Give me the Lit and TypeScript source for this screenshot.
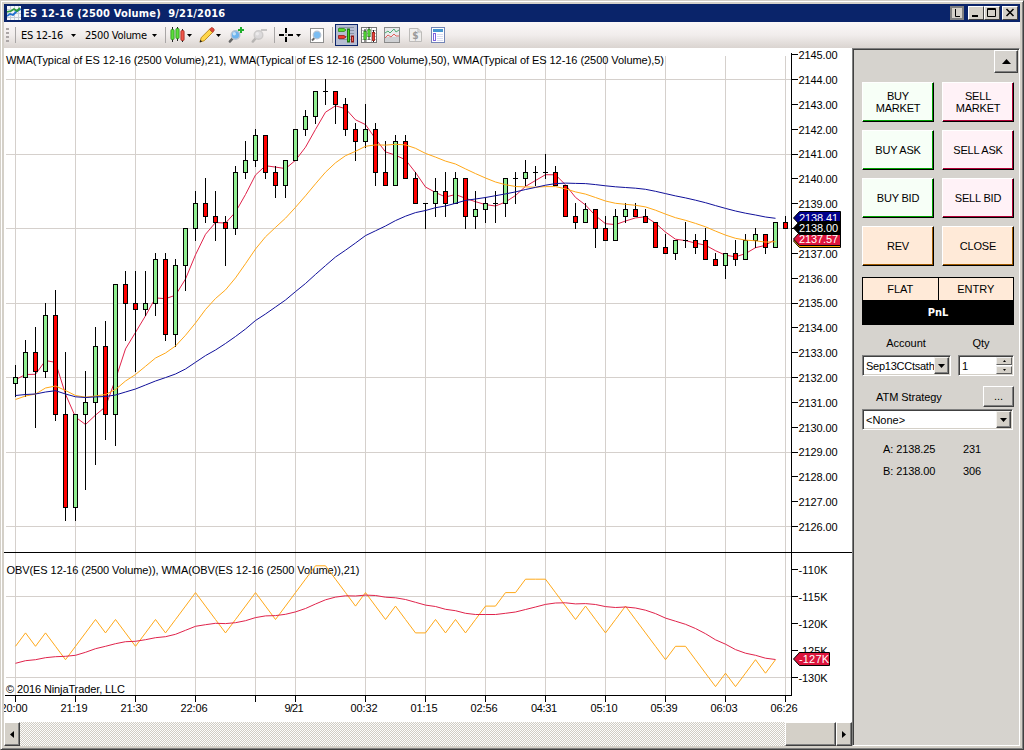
import { LitElement, html, svg, css } from "lit";
import { customElement } from "lit/decorators.js";

// open, high, low, close
type Bar = [number, number, number, number];

// Prices are offsets from 2100: body top, body bottom, high, low, direction
const RAW = `32 31.75 32.5 31.25 g|33 32 33.5 31.25 g|33 32.25 34 30 r|34.5 32.25 35 32 g|34.5 30.5 35.5 30.25 r|30.5 26.75 33 26.25 r
30.5 26.75 30.5 26.25 g|31 30.5 32.25 27.5 g|33.25 31 34 28.5 g|33.25 30.5 34.25 29.5 r|35.75 30.5 35.75 29.25 g|35.75 35 36.25 33.5 r
35 34.75 36.25 32.25 r|35 34.75 36.25 34.5 g|36.75 35 37 34.5 g|36.75 33.75 37 33.5 r|36.5 33.75 36.75 33.25 g|38 36.5 38 35.5 g
39 38 39.5 37.5 g|39 38.5 40 38.25 r|38.5 38.25 39.5 37.5 r|38.25 38 38.5 36.5 r|40.25 38 40.5 37.75 g|40.75 40.25 41.5 40 g
41.75 40.75 42 40.5 g|41.75 40.25 41.75 40 r|40.25 39.75 40.5 39.25 r|40.75 39.75 40.75 39.25 g|42 40.75 42 40.75 g|42.5 42 42.75 41.75 g
43.5 42.5 43.5 42.25 g|43.5 43.5 44 43 g|43.5 43 43.5 42.25 r|43 42 43.25 41.75 r|42 41.5 42.25 40.75 r|42 41.5 43 41.25 g
42 40.25 42.25 39.75 r|40.25 39.75 41.5 39.75 r|41.5 39.75 41.75 39.75 g|41.5 40 41.75 40 r|40 39 40.25 39 r|39 39 39 38 g
39.5 39 40 38.5 g|39.5 39 40.25 38.5 r|40 39 40.25 39 g|40 38.5 40 38 r|38.75 38.5 39.5 38 g|39 38.75 39.25 38.25 g
39 39 39.5 38.25 g|40 39 40 38.5 g|40 40 40.25 39 g|40.25 40 40.75 39.75 g|40.25 40.25 40.5 39.75 g|40.25 40.25 41 40 g
40.25 39.75 40.5 39.75 r|39.75 38.5 39.75 38.5 r|38.5 38.25 39 38 r|38.75 38.25 39 38.25 g|38.75 38 38.75 37.25 r|38 37.5 38.5 37.5 r
38.5 37.5 38.75 37.5 g|38.75 38.5 39 38.25 g|38.75 38.5 39 38.5 r|38.5 38.25 38.75 38.25 r|38.25 37.25 38.25 37.25 r|37.25 37 37.75 37 r
37.5 37 37.5 36.75 g|37.5 37.5 38.25 37.25 g|37.5 37.25 37.75 37 r|37.5 36.75 38 36.75 r|36.75 36.5 37 36.5 r|37 36.5 37 36 g
37 36.75 37.5 36.5 r|37.5 36.75 37.75 36.75 g|37.75 37.5 38 37.25 g|37.75 37.25 37.75 37 r|38.25 37.25 38.25 37.25 g|38.25 38 38.5 38 r`;

const BARS: Bar[] = RAW.split(/[|\n]/).map((s) => {
  const [t, b, h, l, d] = s.trim().split(" ");
  return (d === "g" ? [+b, +h, +l, +t] : [+t, +h, +l, +b]) as Bar;
});

const xAt = (i: number) => 15.5 + i * 10;
const yAt = (p: number) => 79.5 + (44 - p) * 24.83;

const typical = BARS.slice(0, -1).map(([, h, l, c]) => (h + l + c) / 3);

function wma(src: number[], n: number, from: number): number[] {
  const out: number[] = [];
  for (let i = from; i < src.length; i++) {
    let sum = 0;
    for (let k = 0; k < n; k++) sum += src[i - k] * (n - k);
    out.push(sum / ((n * (n + 1)) / 2));
  }
  return out;
}

// The first bars of each average depend on history that precedes the view.
const SEED5 = [379.7, 374.5, 374.3, 360.5];
const SEED21 = [399.5, 396, 394, 388, 386, 390.5, 395.5, 397.2, 396, 394.5, 389.5, 381, 374.5, 366.3, 358, 353, 346, 335.3, 323, 309.5];
const SEED50 = [
  395.5, 394.5, 394, 392, 390.7, 394, 396.8, 397.5, 396.9, 396.5, 395, 392, 389, 385, 381, 377.6, 374, 369, 362.3, 355.6,
  350, 343.5, 336.5, 329, 320.5, 314, 307, 300, 291.6, 283.5, 274.4, 265.6, 257, 250.2, 243, 235.6, 230.8, 226, 220.6, 216.2,
  212.6, 210.5, 207.7, 206, 203.3, 200.4, 199, 197.5, 195.7,
];

// On-balance volume, counted in 2500-contract bars below the peak
const OBV = [
  6, 5, 6, 5, 6, 7, 6, 5, 4, 5, 4, 5, 6, 5, 4, 5, 4, 3, 2, 3, 4, 5, 4, 3, 2, 3, 4, 3, 2, 1, 0, 0, 1, 2, 3, 2, 3, 4, 3, 4,
  5, 5, 4, 5, 4, 5, 4, 3, 3, 2, 2, 1, 1, 1, 2, 3, 4, 3, 4, 5, 4, 3, 4, 5, 6, 7, 6, 6, 7, 8, 9, 8, 9, 8, 7, 8, 7,
];
const obvY = (n: number) => 565.8 + n * 13.42;
const OBV_SEED = [355, 347, 344, 338, 335, 334, 331, 322, 311, 304, 296, 290, 289, 284, 278, 275, 268, 256, 244, 239].map((v) => 545 + v / 3);

const points = (ys: number[]) => ys.map((y, i) => `${xAt(i)},${y.toFixed(1)}`).join(" ");

const LINE5 = points([...SEED5, ...wma(typical, 5, 4).map(yAt)]);
const LINE21 = points([...SEED21, ...wma(typical, 21, 20).map(yAt)]);
const LINE50 = points([...SEED50, ...wma(typical, 50, 49).map(yAt)]);
const LINE_OBV = points(OBV.map(obvY));
const LINE_OBV_WMA = points([...OBV_SEED, ...wma(OBV, 21, 20).map(obvY)]);

const TIMES: [number, string, number][] = [
  [15, "20:00", 27], [75, "21:19", 27], [135, "21:30", 27], [195, "22:06", 27], [255, "", 0], [295, "9/21", 19], [365, "00:32", 27],
  [425, "01:15", 27], [485, "02:56", 27], [545, "04:31", 26], [605, "05:10", 27], [665, "05:39", 27], [725, "06:03", 27], [785, "06:26", 27],
];

@customElement("price-chart")
export class PriceChart extends LitElement {
  static styles = css`
    :host { display: block; background: #fff; overflow: hidden; }
    svg { display: block; font: 11px "Liberation Sans", Arial, sans-serif; }
    .grid { fill: #d5d0cc; }
    .ink { fill: #000; }
    .line { fill: none; stroke-width: 1; }
    .fast { stroke: #e0234b; }
    .mid { stroke: #ffa818; }
    .slow { stroke: #10109a; }
    .up { fill: #90ee90; }
    .down { fill: #f00; }
    .tag { stroke: #000; stroke-width: 1; }
    .tagtext { fill: #fff; }
  `;

  private tag(y: number, color: string, text: string, right: number) {
    const w = text.length > 5 ? 39 : 30;
    return svg`<path class="tag" fill=${color} d=${`M793.5 ${y} L799.5 ${y - 6.5} H${right} V${y + 6.5} H799.5 Z`}></path>
      ${text ? svg`<text class="tagtext" x="799" y=${y + 4} textLength=${w}>${text}</text>` : ""}`;
  }

  private candle(b: Bar, i: number) {
    const x = 15 + i * 10;
    const f = (p: number) => Math.floor(yAt(p) + 0.05);
    const [o, h, l, c] = b;
    const t = f(Math.max(o, c));
    const m = f(Math.min(o, c));
    return svg`<rect x=${x} y=${f(h)} width="1" height=${f(l) - f(h) + 1}></rect>
      <rect x=${x - 2} y=${t} width="5" height=${m - t + 1}></rect>
      ${m - t > 1 ? svg`<rect class=${c > o ? "up" : "down"} x=${x - 1} y=${t + 1} width="3" height=${m - t - 1}></rect>` : ""}`;
  }

  render() {
    const prices = Array.from({ length: 20 }, (_, k) => 45 - k);
    const volumes = [110, 115, 120, 125, 130];
    const vy = (v: number) => Math.floor(569.5 + (v - 110) * 5.4);
    return html`<svg width="848" height="674" viewBox="4 48 848 674">
      <g class="grid" shape-rendering="crispEdges">
        ${[44, 41, 38, 35, 32, 29, 26].map((p) => svg`<rect x="6" y=${Math.floor(yAt(p) + 0.05)} width="785" height="1"></rect>`)}
        ${[115, 130].map((v) => svg`<rect x="6" y=${vy(v)} width="785" height="1"></rect>`)}
        ${TIMES.map(([x]) => svg`<rect x=${x} y="56" width="1" height="639"></rect>`)}
      </g>
      <text x="6" y="64" textLength="658">WMA(Typical of ES 12-16 (2500 Volume),21), WMA(Typical of ES 12-16 (2500 Volume),50), WMA(Typical of ES 12-16 (2500 Volume),5)</text>
      <text x="6.5" y="574" textLength="353">OBV(ES 12-16 (2500 Volume)), WMA(OBV(ES 12-16 (2500 Volume)),21)</text>
      <text x="6" y="693" textLength="119">© 2016 NinjaTrader, LLC</text>
      <polyline class="line fast" points=${LINE5}></polyline>
      <g shape-rendering="crispEdges">${BARS.map((b, i) => this.candle(b, i))}</g>
      <polyline class="line mid" points=${LINE21}></polyline>
      <polyline class="line slow" points=${LINE50}></polyline>
      <polyline class="line mid" points=${LINE_OBV}></polyline>
      <polyline class="line fast" points=${LINE_OBV_WMA}></polyline>
      <g class="ink" shape-rendering="crispEdges">
        <rect x="4" y="552" width="848" height="1"></rect>
        <rect x="791" y="53" width="1" height="643"></rect>
        <rect x="5" y="695" width="787" height="1"></rect>
        ${prices.map((p) => svg`<rect x="792" y=${Math.floor(yAt(p) + 0.05)} width="6" height="1"></rect>`)}
        ${volumes.map((v) => svg`<rect x="792" y=${vy(v)} width="6" height="1"></rect>`)}
        ${TIMES.map(([x]) => svg`<rect x=${x} y="696" width="1" height="6"></rect>`)}
      </g>
      ${prices.filter((p) => p !== 38).map((p) => svg`<text x="798.5" y=${Math.floor(yAt(p)) + 4.5} textLength="39">${2100 + p}.00</text>`)}
      ${volumes.map((v) => svg`<text x="798.5" y=${vy(v) + 4.5} textLength="29">-${v}K</text>`)}
      ${TIMES.map(([x, t, w]) => (t ? svg`<text x=${x - 1 - w / 2} y="712" textLength=${w}>${t}</text>` : ""))}
      ${this.tag(218, "#00008b", "2138.41", 840.5)}
      ${this.tag(241, "#ffa500", "", 840.5)}
      ${this.tag(239, "#dc143c", "2137.57", 840.5)}
      ${this.tag(228, "#000", "2138.00", 840.5)}
      ${this.tag(659, "#dc143c", "-127K", 829.5)}
    </svg>`;
  }
}

const arrow = html`<svg class="arrow" width="5" height="3"><path d="M0 0H5L2.5 3Z"></path></svg>`;
const sep = html`<span class="sep"></span>`;

const lens = (fade: boolean, mark: unknown) => html`<svg width="17" height="17" viewBox="0 0 17 17" opacity=${fade ? 0.5 : 1}>
  <path d="M4.6 11.4L1.8 14.6" stroke=${fade ? "#888" : "#666"} stroke-width="2.4" stroke-linecap="round"></path>
  <circle cx="7.5" cy="8" r="4.3" fill=${fade ? "#c8c8cc" : "#6fb4ee"} stroke=${fade ? "#aaa" : "#b5c3d3"} stroke-width="1.4"></circle>
  <circle cx="6.3" cy="6.8" r="1.7" fill="#fff" opacity=".6"></circle>${mark}
</svg>`;

@customElement("app-root")
export class AppRoot extends LitElement {
  static styles = css`
    :host { display: block; width: 1024px; height: 750px; font: 11px "Liberation Sans", Arial, sans-serif; color: #000; }
    .window {
      box-sizing: border-box; width: 1024px; height: 750px; background: #d4d0c8; padding: 3px 2px 2px 3px;
      border: 1px solid; border-color: #d4d0c8 #404040 #404040 #d4d0c8;
      box-shadow: inset 1px 1px #fff, inset -1px -1px #808080;
    }
    .title { display: flex; align-items: center; width: 1016px; height: 18px; background: #0a246a; color: #fff; }
    .title .name { font: bold 11px "DejaVu Sans Condensed", "DejaVu Sans", sans-serif; font-stretch: condensed; flex: 1; margin-left: 2px; white-space: pre; letter-spacing: 0.19px; }
    .title .logo { margin-left: 3px; }
    .wb { box-sizing: border-box; width: 16px; height: 14px; background: #d4d0c8; border: 1px solid; border-color: #fff #404040 #404040 #fff; display: block; }
    .wb.lock { width: 14px; background: #d4d0c8; border: 2px solid #808080; margin-right: 4px; }
    .wb.close { margin: 0 2px 0 2px; }
    .wb svg { display: block; }
    .toolbar {
      display: grid; align-items: center; width: 1016px; height: 26px;
      background: linear-gradient(#fbf8f8, #f1edec 50%, #dad4d0);
      font: 11px "DejaVu Sans Condensed", "DejaVu Sans", sans-serif; font-stretch: condensed;
      grid-template-columns: 11px 6px 50px 14px 67px 13px 5px 17px 12px 17px 12px 23px 23px 5px 17px 14px 22px 3px 26px 23px 25px 22px 16px;
    }
    .toolbar svg { display: block; }
    .grip { width: 3px; height: 15px; margin-left: 2px; background: repeating-linear-gradient(#aaa5a5 0 2px, transparent 2px 4px); }
    .sep { width: 1px; height: 16px; background: #a9a6a6; }
    .press { box-sizing: border-box; width: 23px; height: 22px; border: 1px solid #0a246a; background: #b6bdd2; padding: 2px; }
    .tx { white-space: nowrap; letter-spacing: -0.3px; }
    .body { display: grid; grid-template-columns: 848px 168px; height: 698px; }
    .left { display: grid; grid-template-rows: 674px 24px; }
    .scroll { display: flex; justify-content: space-between; background: repeating-conic-gradient(#d0ccc4 0 25%, #fdfdfc 0 50%) 0 0 / 2px 2px; }
    .sb { box-sizing: border-box; width: 16px; height: 24px; background: #d4d0c8; border: 1px solid; border-color: #fff #404040 #404040 #fff; box-shadow: inset -1px -1px #808080; display: grid; place-items: center; }
    .thumb { width: 51px; margin-left: auto; }
    .panel {
      box-sizing: border-box; border: 1px solid; border-color: #808080 #fff #fff #808080; box-shadow: inset 1px 1px #404040;
      padding: 1px 1px 0 9px; display: flex; flex-direction: column; background: #d6d3ce;
    }
    .up { box-sizing: border-box; align-self: flex-end; width: 24px; height: 23px; border: 1px solid; border-color: #fff #404040 #404040 #fff; box-shadow: inset -1px -1px #808080; display: grid; place-items: center; }
    .orders { display: grid; grid-template-columns: 72px 72px; grid-auto-rows: 40px; gap: 8px; margin-top: 9px; }
    .btn {
      box-sizing: border-box; display: grid; place-items: center; text-align: center; line-height: 12px; padding: 0 1px 1px 1px;
      border: 1px solid; border-color: #fff #000 #000 #fff; letter-spacing: -0.2px;
    }
    .buy { background: #f7fff7; box-shadow: inset -1px -1px #00a000; }
    .sell { background: #fff2f7; box-shadow: inset -1px -1px #b00035; }
    .misc { background: #ffead8; box-shadow: inset -1px -1px #a05a00; }
    .pos { box-sizing: border-box; display: grid; grid-template-columns: 1fr 1fr; width: 152px; height: 48px; margin-top: 11px; background: #000; padding: 1px; grid-template-rows: 22px 24px; column-gap: 1px; }
    .pos span { background: #ffead8; display: grid; place-items: center; }
    .pos .pnl { grid-column: 1 / 3; background: #000; color: #fff; font: bold 11px "DejaVu Sans Condensed", "DejaVu Sans", sans-serif; }
    .labels { display: grid; grid-template-columns: 88px 62px; margin-top: 12px; height: 13px; line-height: 13px; text-align: center; }
    .fields { display: flex; gap: 7px; margin-top: 5px; }
    .field { box-sizing: border-box; height: 21px; background: #fff; border: 1px solid; border-color: #808080 #fff #fff #808080; box-shadow: inset 1px 1px #404040, inset -1px -1px #d4d0c8; display: flex; padding: 1px; line-height: 18px; overflow: hidden; }
    .field .val { flex: 1; overflow: hidden; white-space: nowrap; padding-left: 2px; letter-spacing: -0.25px; }
    .drop { box-sizing: border-box; width: 15px; height: 17px; background: #d4d0c8; border: 1px solid; border-color: #f4f2ee #404040 #404040 #f4f2ee; box-shadow: inset -1px -1px #808080; display: grid; place-items: center; }
    .acct { width: 89px; }
    .qty { width: 56px; }
    .spin { width: 16px; display: grid; grid-template-rows: 8px 8px; gap: 1px; }
    .spin span { background: #d4d0c8; border: 1px solid; border-color: #eee #606060 #606060 #eee; box-sizing: border-box; display: grid; place-items: center; }
    .atm { display: flex; justify-content: space-between; width: 152px; margin-top: 10px; height: 22px; line-height: 22px; }
    .atm .cap { padding-left: 14px; letter-spacing: -0.05px; }
    .more { box-sizing: border-box; width: 31px; height: 21px; border: 1px solid; border-color: #fff #404040 #404040 #fff; box-shadow: inset -1px -1px #808080; text-align: center; line-height: 19px; }
    .strategy { width: 151px; margin-top: 1px; }
    .strategy .val { letter-spacing: 0; }
    .quotes { display: grid; grid-template-columns: 80px 50px; grid-auto-rows: 22px; margin: 8px 0 0 21px; line-height: 22px; letter-spacing: -0.1px; }
  `;

  render() {
    return html`<div class="window">
      <div class="title">
        <svg class="logo" width="14" height="14" viewBox="0 0 14 14">
          <rect width="14" height="14" fill="#f4f6f8"></rect>
          <path d="M0 3.5H14M0 7.5H14M0 11.5H14M3.5 0V14M7.5 0V14M11.5 0V14" stroke="#c5ccd8"></path>
          <path d="M0 10L3 8L6 9L10 5L14 3" fill="none" stroke="#1d6fd0" stroke-width="1.8"></path>
          <path d="M0 6L4 5L7 3L10 5L13 2" fill="none" stroke="#2d9a3c" stroke-width="1.8"></path>
        </svg>
        <span class="name">ES 12-16 (2500 Volume)  9/21/2016</span>
        <span class="wb lock"><svg width="10" height="10"><path d="M3.5 1V8.5H8" fill="none" stroke="#000"></path></svg></span>
        <span class="wb"><svg width="14" height="12"><rect x="3" y="8" width="6" height="2"></rect></svg></span>
        <span class="wb"><svg width="14" height="12"><path d="M2.5 1.5H10.5V9.5H2.5ZM2.5 2.5H10.5" fill="none" stroke="#000"></path></svg></span>
        <span class="wb close"><svg width="14" height="12"><path d="M3.5 2L10.5 9M10.5 2L3.5 9" stroke="#000" stroke-width="1.5"></path></svg></span>
      </div>
      <div class="toolbar">
        <span class="grip"></span>${sep}
        <span class="tx">ES 12-16</span>${arrow}
        <span class="tx">2500 Volume</span>${arrow}
        ${sep}
        <svg width="15" height="16" viewBox="0 0 15 16">
          <path d="M2.5 0V15M7.5 0V14M12.5 2V15" stroke="#222"></path>
          <rect x=".9" y="2.5" width="3.2" height="10" rx="1" fill="#5be03a" stroke="#2a8a1a" stroke-width=".8"></rect>
          <rect x="5.9" y="1.5" width="3.2" height="10" rx="1" fill="#5be03a" stroke="#2a8a1a" stroke-width=".8"></rect>
          <rect x="10.9" y="3.5" width="3.2" height="10" rx="1" fill="#f0564a" stroke="#a02a20" stroke-width=".8"></rect>
        </svg>${arrow}
        <svg width="16" height="16" viewBox="0 0 16 16">
          <path d="M1 15L2.2 10.6L10.5 2.3L13.6 5.4L5.3 13.7Z" fill="#ffd64a" stroke="#b5851c" stroke-width=".9"></path>
          <path d="M10.5 2.3L12 .8Q13 .2 14 1L15 2Q15.6 3 15 3.9L13.6 5.4Z" fill="#e0483a" stroke="#a03020" stroke-width=".6"></path>
          <path d="M.6 15.4L1.5 12.8L3.2 14.5Z" fill="#222"></path>
        </svg>${arrow}
        ${lens(false, svg`<path d="M13 0V6M10 3H16" stroke="#1fae2b" stroke-width="2"></path>`)}
        ${lens(true, svg`<path d="M10 3H16" stroke="#999" stroke-width="2"></path>`)}
        ${sep}
        <svg width="15" height="15" viewBox="0 0 15 15"><path d="M7 0V5M7 9V14M0 7H5M9 7H14" stroke="#000" stroke-width="2"></path><rect x="6.5" y="6.5" width="1" height="1"></rect></svg>${arrow}
        <svg width="15" height="17" viewBox="0 0 15 17">
          <rect x=".5" y="1.5" width="13" height="14" fill="#fff" stroke="#8e8e8e"></rect>
          <path d="M4.5 11L2 13.5" stroke="#666" stroke-width="2"></path>
          <circle cx="7" cy="8" r="3.8" fill="#7abdf2" stroke="#b5c3d3" stroke-width="1.2"></circle>
        </svg>${sep}
        <div class="press"><svg width="17" height="16" viewBox="0 0 17 16">
          <path d="M1 .5H16M9 3.5H16M9 6.5H16M1 9.5H16M1 12.5H16" stroke="#8a93a8"></path>
          <path d="M.5 1.5H6L8 3L6 4.5H.5Z" fill="#5ae02c" stroke="#2c8a18" stroke-width=".8"></path>
          <path d="M.5 8.5H6L8 10L6 11.5H.5Z" fill="#ee3a30" stroke="#901c18" stroke-width=".8"></path>
          <rect x="9.5" y="2" width="2" height="13" fill="#4ad026" stroke="#1f7812"></rect>
          <rect x="13.5" y="9" width="2" height="6" fill="#f07068" stroke="#901c18"></rect>
        </svg></div>
        <svg width="16" height="16" viewBox="0 0 16 16">
          <rect x=".5" y=".5" width="15" height="15" fill="#fff" stroke="#777"></rect>
          <path d="M1 3.5H15M1 6.5H15M1 9.5H15M1 12.5H15M5.5 1V15M10.5 1V15" stroke="#bbb"></path>
          <path d="M4 2V15M8 0V13M12.5 3V15" stroke="#222"></path>
          <rect x="2.9" y="4.5" width="2.2" height="8" fill="#5ce83a" stroke="#2a8a1a" stroke-width=".8"></rect>
          <rect x="6.9" y="2.5" width="2.2" height="7" fill="#5ce83a" stroke="#2a8a1a" stroke-width=".8"></rect>
          <rect x="11.4" y="5.5" width="2.2" height="8" fill="#ee4038" stroke="#a02018" stroke-width=".8"></rect>
        </svg>
        <svg width="16" height="16" viewBox="0 0 16 16">
          <rect x=".5" y=".5" width="15" height="15" fill="#e9eaec" stroke="#8a8a8a"></rect>
          <rect x="1" y="10" width="14" height="5" fill="#cfd1d4"></rect>
          <path d="M1 6L4 4L6 6L10 2L12 5L15 3" fill="none" stroke="#4fae74"></path>
          <path d="M1 11L4 8L7 10L10 7L12 9L15 9" fill="none" stroke="#e0605c"></path>
        </svg>
        <svg width="13" height="16" viewBox="0 0 13 16">
          <path d="M.5 1.5H9L12.5 5V14.5H.5Z" fill="#efeeed" stroke="#bdbbb9"></path>
          <path d="M9 1.5V5H12.5" fill="none" stroke="#bdbbb9"></path>
          <text x="3.2" y="12" font-size="10" font-weight="bold" fill="#999">$</text>
        </svg>
        <svg width="14" height="16" viewBox="0 0 14 16">
          <rect x=".5" y=".5" width="13" height="15" fill="#fff" stroke="#7385b5"></rect>
          <rect x="2" y="2" width="10" height="3" fill="#4796d0"></rect>
          <rect x="2.5" y="6.5" width="2" height="7" fill="#fff" stroke="#7e62e0"></rect>
          <path d="M6 7.5H12M6 9.5H12M6 11.5H12M6 13.5H12" stroke="#d9dcf2"></path>
        </svg>
      </div>
      <div class="body">
        <div class="left">
          <price-chart></price-chart>
          <div class="scroll">
            <span class="sb"><svg width="4" height="7"><path d="M4 0V7L0 3.5Z"></path></svg></span>
            <span class="sb thumb"></span>
            <span class="sb"><svg width="4" height="7"><path d="M0 0V7L4 3.5Z"></path></svg></span>
          </div>
        </div>
        <div class="panel">
          <span class="up"><svg width="9" height="5"><path d="M0 5H9L4.5 0Z"></path></svg></span>
          <div class="orders">
            <div class="btn buy"><span>BUY<br />MARKET</span></div><div class="btn sell"><span>SELL<br />MARKET</span></div>
            <div class="btn buy">BUY ASK</div><div class="btn sell">SELL ASK</div>
            <div class="btn buy">BUY BID</div><div class="btn sell">SELL BID</div>
            <div class="btn misc">REV</div><div class="btn misc">CLOSE</div>
          </div>
          <div class="pos"><span>FLAT</span><span>ENTRY</span><span class="pnl">PnL</span></div>
          <div class="labels"><span>Account</span><span>Qty</span></div>
          <div class="fields">
            <div class="field acct"><span class="val">Sep13CCtsath</span><span class="drop"><svg width="7" height="4"><path d="M0 0H7L3.5 4Z"></path></svg></span></div>
            <div class="field qty"><span class="val">1</span><span class="spin"><span><svg width="3" height="2"><path d="M0 2H3L1.5 0Z"></path></svg></span><span><svg width="3" height="2"><path d="M0 0H3L1.5 2Z"></path></svg></span></span></div>
          </div>
          <div class="atm"><span class="cap">ATM Strategy</span><span class="more">...</span></div>
          <div class="field strategy"><span class="val">&lt;None&gt;</span><span class="drop"><svg width="7" height="4"><path d="M0 0H7L3.5 4Z"></path></svg></span></div>
          <div class="quotes"><span>A: 2138.25</span><span>231</span><span>B: 2138.00</span><span>306</span></div>
        </div>
      </div>
    </div>`;
  }
}
